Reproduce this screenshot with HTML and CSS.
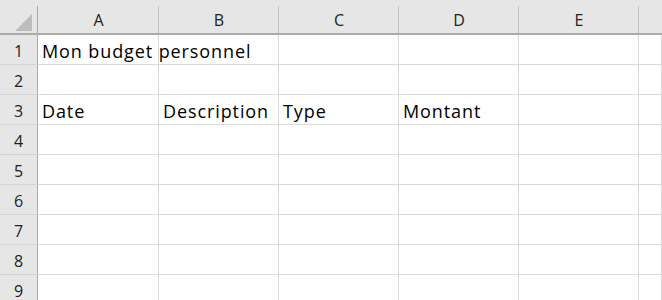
FILE: index.html
```html
<!DOCTYPE html>
<html lang="fr">
<head>
  <meta charset="UTF-8">
  <title>Mon budget personnel</title>
  <link rel="stylesheet" href="styles.css">
</head>
<body>

  <table class="sheet">
    <tr class="head">
      <th class="corner">
        <svg width="18" height="18" viewBox="0 0 18 18"><polygon points="17,0 17,17 0,17" fill="#bdbdbd"/></svg>
      </th>
      <th class="col a">A</th>
      <th class="col">B</th>
      <th class="col">C</th>
      <th class="col">D</th>
      <th class="col">E</th>
      <th class="col last"></th>
    </tr>
    <tr>
      <th class="num">1</th>
      <td class="a">Mon budget personnel</td><td></td><td></td><td></td><td></td><td></td>
    </tr>
    <tr>
      <th class="num">2</th>
      <td class="a"></td><td></td><td></td><td></td><td></td><td></td>
    </tr>
    <tr>
      <th class="num">3</th>
      <td class="a">Date</td><td>Description</td><td>Type</td><td>Montant</td><td></td><td></td>
    </tr>
    <tr>
      <th class="num">4</th>
      <td class="a"></td><td></td><td></td><td></td><td></td><td></td>
    </tr>
    <tr>
      <th class="num">5</th>
      <td class="a"></td><td></td><td></td><td></td><td></td><td></td>
    </tr>
    <tr>
      <th class="num">6</th>
      <td class="a"></td><td></td><td></td><td></td><td></td><td></td>
    </tr>
    <tr>
      <th class="num">7</th>
      <td class="a"></td><td></td><td></td><td></td><td></td><td></td>
    </tr>
    <tr>
      <th class="num">8</th>
      <td class="a"></td><td></td><td></td><td></td><td></td><td></td>
    </tr>
    <tr>
      <th class="num">9</th>
      <td class="a"></td><td></td><td></td><td></td><td></td><td></td>
    </tr>
  </table>

</body>
</html>
```

FILE: styles.css
```css
body {
  margin: 0;
  background: #ffffff;
  font-family: 'Open Sans', 'Lato', sans-serif;
  overflow: hidden;
}

.sheet {
  border-collapse: separate;
  border-spacing: 0;
  table-layout: fixed;
  width: 662px;
}

th, td {
  box-sizing: border-box;
  padding: 0;
  font-size: 18px;
  font-weight: 400;
  white-space: nowrap;
  overflow: visible;
}

/* column header strip */
.head th {
  height: 35px;
  background-color: #e6e6e6;
  border-bottom: 2px solid #ababab;
  color: #222222;
  font-size: 16px;
  text-align: center;
  vertical-align: bottom;
  padding-bottom: 3px;
  line-height: 20px;
}

.head .col {
  width: 120px;
  background-image: linear-gradient(to bottom, transparent 6px, #c4c4c4 6px);
  background-size: 1px 100%;
  background-repeat: no-repeat;
  background-position: right top;
}

.head .col.a {
  width: 121px;
}

.head .col.last {
  width: auto;
  background-image: none;
}

.corner {
  width: 38px;
  text-align: right !important;
  vertical-align: bottom;
  padding: 0 5px 1px 0 !important;
  background-image: linear-gradient(to bottom, transparent 6px, #ababab 6px);
  background-size: 1px 100%;
  background-repeat: no-repeat;
  background-position: right top;
}

.corner svg {
  display: block;
  margin-left: auto;
}

/* row numbers */
.num {
  height: 30px;
  width: 38px;
  background: #e6e6e6;
  border-right: 1px solid #ababab;
  border-bottom: 1px solid #d4d4d4;
  color: #222222;
  font-size: 16px;
  text-align: center;
  vertical-align: bottom;
  padding-bottom: 3px;
  line-height: 20px;
}

/* cells */
td {
  height: 30px;
  border-right: 1px solid #dadada;
  border-bottom: 1px solid #dadada;
  color: #000000;
  letter-spacing: 0.9px;
  vertical-align: bottom;
  padding: 0 0 3px 4px;
  line-height: 20px;
}
```
